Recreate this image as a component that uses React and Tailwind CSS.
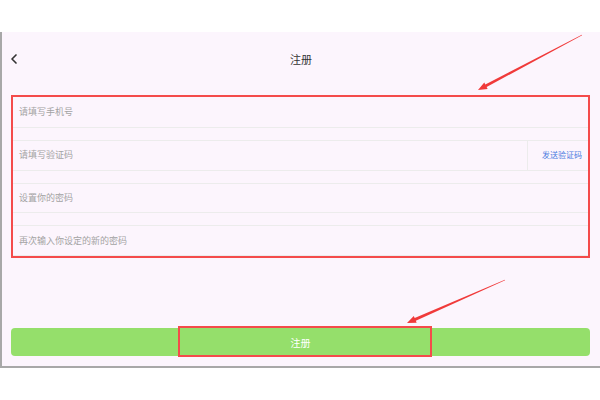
import { ChevronLeft } from 'lucide-react';

const FONT = '"Noto Sans CJK SC", "Noto Sans", sans-serif';

function Field({ placeholder, first, children }) {
  return (
    <div className={`flex items-center h-[31px] border-b border-[#ececec] ${first ? '' : 'border-t'}`}>
      {children ? children : (
        <span className="pl-[6px] text-[9px] text-[#a3a3a3]">{placeholder}</span>
      )}
    </div>
  );
}

function Arrow({ x1, y1, x2, y2 }) {
  // tapered red arrow pointing from (x1,y1) to (x2,y2)
  const dx = x2 - x1;
  const dy = y2 - y1;
  const len = Math.hypot(dx, dy);
  const ux = dx / len;
  const uy = dy / len;
  const nx = -uy;
  const ny = ux;
  const headLen = 9;
  const bx = x2 - ux * headLen;
  const by = y2 - uy * headLen;
  const pts = [
    [x1 + nx * 0.3, y1 + ny * 0.3],
    [bx + nx * 1.4, by + ny * 1.4],
    [bx + nx * 3.6, by + ny * 3.6],
    [x2, y2],
    [bx - nx * 3.6, by - ny * 3.6],
    [bx - nx * 1.4, by - ny * 1.4],
    [x1 - nx * 0.3, y1 - ny * 0.3],
  ];
  return <polygon points={pts.map(p => p.join(',')).join(' ')} fill="#f03a3a" />;
}

export default function App() {
  return (
    <div className="relative w-[600px] h-[400px] bg-white overflow-hidden" style={{ fontFamily: FONT }}>
      <div className="mt-[32px] h-[336px] bg-[#fcf5fd] border-l-2 border-b-2 border-[#a8a8a8] flex flex-col">

        {/* Header */}
        <div className="relative h-[54px] flex items-center justify-center">
          <ChevronLeft className="absolute left-[4px] w-[16px] h-[16px] text-[#333]" strokeWidth={2.5} />
          <span className="text-[11px] text-[#333]">注册</span>
        </div>

        {/* Form */}
        <div className="ml-[9px] mr-[10px] mt-[9px] h-[163px] border-2 border-[#f44b4b] flex flex-col gap-[12px]">
          <Field first placeholder="请填写手机号" />
          <div className="flex items-center h-[31px] border-y border-[#ececec]">
            <div className="flex-1 h-full flex items-center border-r border-[#ececec] mr-[14px]">
              <span className="pl-[6px] text-[9px] text-[#a3a3a3]">请填写验证码</span>
            </div>
            <span className="text-[8px] text-[#4a7be0] mr-[6px]">发送验证码</span>
          </div>
          <Field placeholder="设置你的密码" />
          <Field placeholder="再次输入你设定的新的密码" />
        </div>

        {/* Submit */}
        <div className="relative ml-[9px] mr-[10px] mt-[70px] h-[28px] rounded-[4px] bg-[#95df6b] flex items-center justify-center">
          <span className="text-[10px] text-white">注册</span>
          <div className="absolute left-[167px] top-[-2px] w-[254px] h-[31px] border-2 border-[#f44b4b]" />
        </div>
      </div>

      {/* Annotation arrows */}
      <svg className="absolute inset-0 pointer-events-none" width="600" height="400">
        <Arrow x1={582} y1={35} x2={478} y2={90} />
        <Arrow x1={505} y1={280} x2={407} y2={323} />
      </svg>
    </div>
  );
}
